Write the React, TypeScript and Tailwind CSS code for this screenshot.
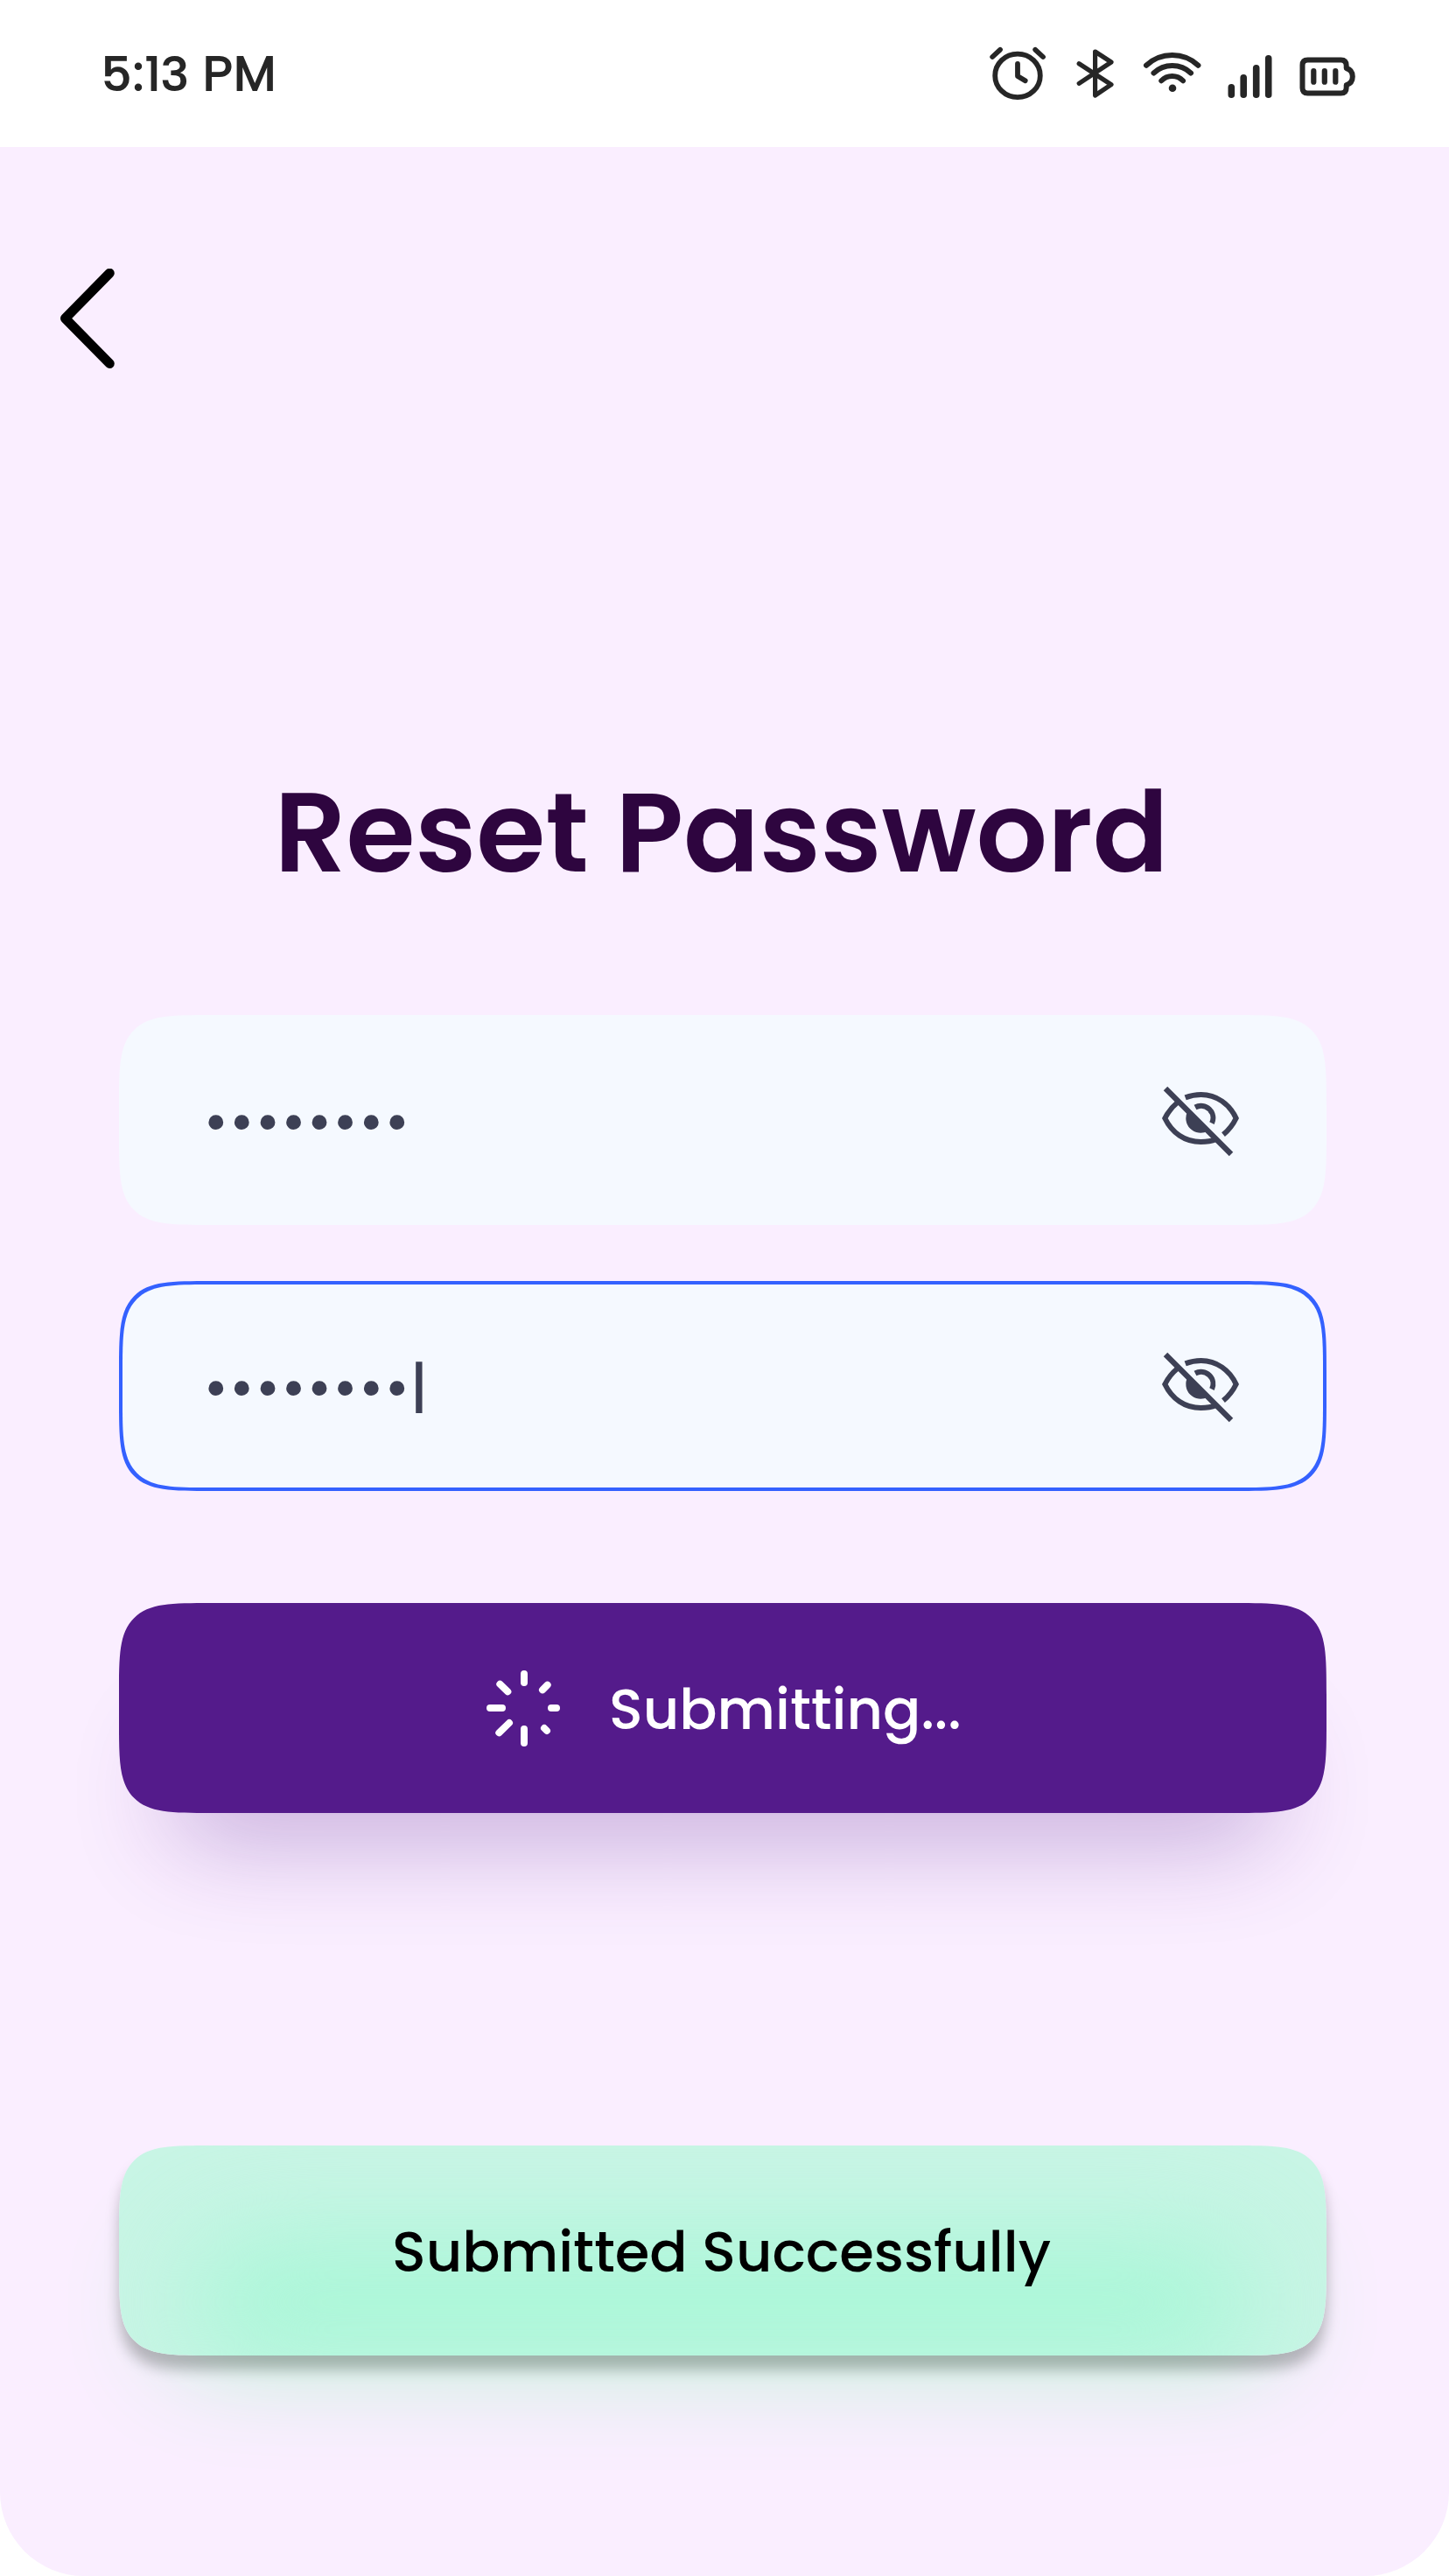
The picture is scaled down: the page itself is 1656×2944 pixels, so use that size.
import React from "react";

const StatusIcons = () => (
  <svg className="h-[68px] w-[420px]" viewBox="1130 50 420 68" fill="none" stroke="#262626" strokeLinecap="round" strokeLinejoin="round">
    <g strokeWidth="5.8">
      <ellipse cx="1163" cy="86.4" rx="25.8" ry="24.7" />
      <path d="M1134.2 65L1143 56.8M1183.2 56.8L1192 65M1163 73V87L1171.7 92.3" />
    </g>
    <path strokeWidth="5.2" d="M1233.2 72.7L1270 96.7L1251.6 109V59L1270 71L1233.2 95.3" />
    <g strokeWidth="6">
      <path d="M1310 74.8A43.5 43.5 0 0 1 1369.4 74.8M1318.5 83.5A31 31 0 0 1 1361 83.5M1327.3 92.3A17 17 0 0 1 1352 92.3" />
    </g>
    <circle cx="1340" cy="100.7" r="4.3" fill="#262626" stroke="none" />
    <path strokeWidth="7.6" d="M1407.3 99.8V108.2M1421.2 88.8V108.2M1435.7 77.8V108.2M1449.7 66.8V108.2" />
    <path strokeWidth="6" d="M1494.5 68.5H1532.5Q1538.7 68.5 1538.7 75V78Q1545.8 80 1545.8 87.6Q1545.8 95.2 1538.7 97.2V100Q1538.7 106.5 1532.5 106.5H1494.5Q1488.5 106.5 1488.5 100.5V74.5Q1488.5 68.5 1494.5 68.5Z" />
    <path strokeWidth="6.2" d="M1501.3 81.2V93.7M1513.8 81.2V93.7M1526.3 81.2V93.7" />
  </svg>
);

const BackIcon = () => (
  <svg className="h-[114px] w-[62px]" viewBox="69 307 62 114" fill="none" stroke="#000" strokeWidth="11" strokeLinecap="round" strokeLinejoin="round">
    <path d="M125.3 312.2L74.5 363.8L125.3 415.5" />
  </svg>
);

const EyeOff = () => (
  <svg className="mt-[3px] h-[83px] w-[90px] shrink-0" viewBox="54 60 270 249" fill="none" stroke="#3d4055" strokeWidth="18">
    <path d="M134 103Q160 93 188 93C240 93 286 125 308 174Q292 207 264 230" />
    <path d="M107 120Q80 142 64 174C88 224 132 255 187 255Q218 255 240 246" />
    <path d="M168 136.5A41.5 41.5 0 0 1 225 191" />
    <path d="M142.8 148.8A50 50 0 0 0 211.2 217.2Z" fill="#3d4055" stroke="none" />
    <path d="M66 72L291 297" strokeWidth="19" />
  </svg>
);

const Spinner = () => (
  <svg className="h-[87px] w-[84px] shrink-0" viewBox="51 57 252 261" fill="none" stroke="#fff" strokeWidth="24" strokeLinecap="round">
    <path d="M180 69V99M243 124L260 107M273 186H291M249 255L258 264M180 258V306M129 237L94 271M63 186H105M97 104L124 130" />
  </svg>
);

function PasswordField({ focused = false }: { focused?: boolean }) {
  return (
    <div
      className={`flex h-[240px] w-[1380px] items-center justify-between rounded-[108px] border-4 bg-[#f5f9ff] pl-[92px] pr-[94px] [corner-shape:squircle] ${
        focused ? "border-[#3461ff]" : "border-[#f5f9ff]"
      }`}
    >
      <span className="pt-[4px] text-[64px] font-medium leading-none text-[#3d4055]">{focused ? "••••••••|" : "••••••••"}</span>
      <EyeOff />
    </div>
  );
}

export default function App() {
  return (
    <div className="flex h-[2944px] w-[1656px] flex-col bg-white font-['Poppins','Lato',sans-serif]">
      <header className="flex h-[168px] shrink-0 items-center justify-between pl-[116px] pr-[106px]">
        <span className="pt-px font-['Albert_Sans','Figtree','Lato',sans-serif] text-[56px] font-semibold leading-none tracking-[-0.3px] text-[#262626]">5:13 PM</span>
        <StatusIcons />
      </header>
      <main className="flex flex-1 flex-col items-center rounded-b-[96px] bg-[#faeeff] pr-1 pt-[139px]">
        <button className="ml-[69px] self-start" aria-label="Back">
          <BackIcon />
        </button>
        <h1 className="mr-[3px] mt-[467px] text-[128px] font-semibold leading-none text-[#2e053f]">Reset Password</h1>
        <div className="mt-[144px] flex flex-col gap-16">
          <PasswordField />
          <PasswordField focused />
        </div>
        <button className="mt-[128px] flex h-[240px] w-[1380px] items-center gap-[56px] rounded-[108px] bg-[#541b8b] pl-[420px] text-[64px] font-medium leading-none text-white shadow-[0_94px_112px_-60px_rgba(84,27,139,0.3)] [corner-shape:squircle]">
          <Spinner />
          <span className="pt-[3px]">Submitting...</span>
        </button>
        <div className="mt-[380px] h-[240px] w-[1380px] rounded-[108px] shadow-[0_16px_16px_rgba(0,0,0,0.25),0_64px_120px_-58px_rgba(50,255,110,0.33)] [corner-shape:squircle]">
          <div className="relative flex h-full items-center justify-center overflow-hidden rounded-[108px] bg-[#c8f5e5] [corner-shape:squircle]">
            <div className="absolute inset-x-[84px] bottom-[-5px] h-[132px] rounded-[66px] bg-[#a6f7d6] blur-[60px]" />
            <span className="relative pr-[3px] pt-[3px] text-[64px] font-medium leading-none text-black">Submitted Successfully</span>
          </div>
        </div>
      </main>
    </div>
  );
}
